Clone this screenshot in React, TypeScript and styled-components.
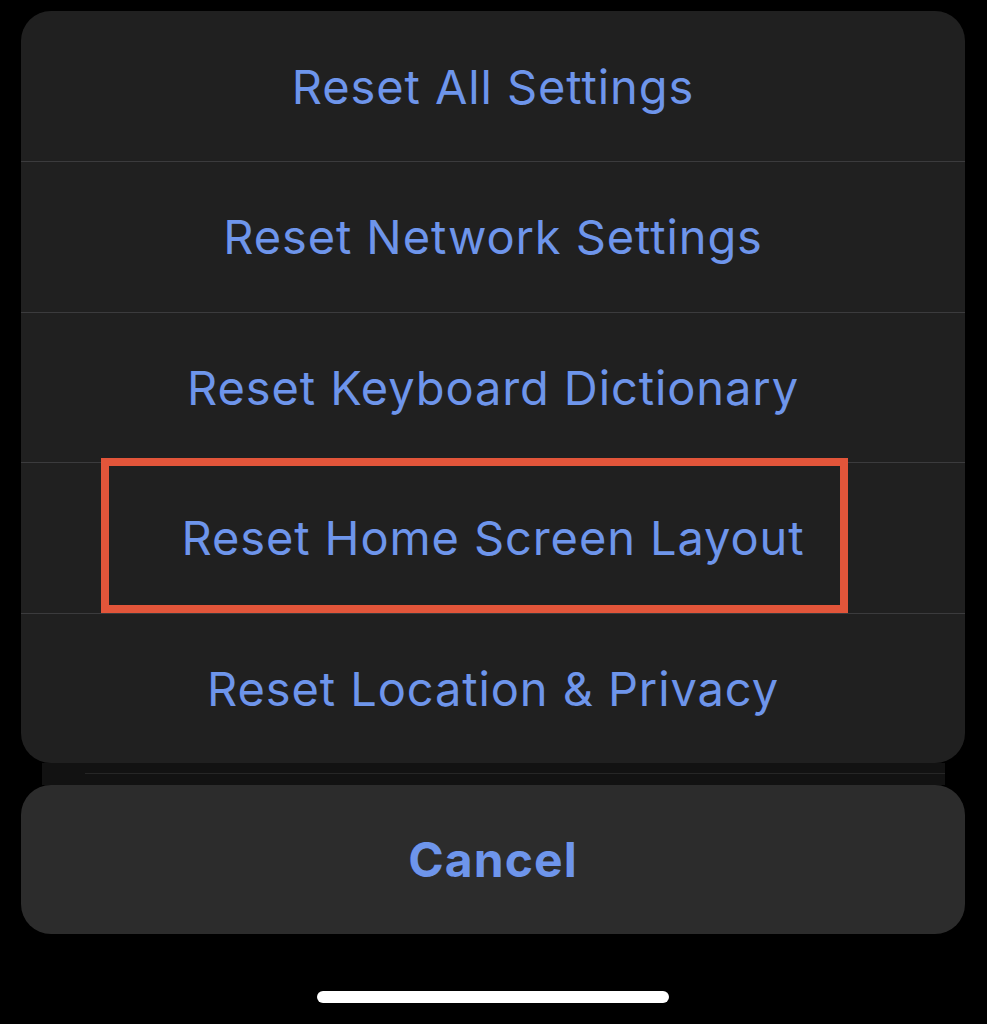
import styled, { createGlobalStyle } from "styled-components"

const GlobalStyle = createGlobalStyle`
    html, body {
        margin: 0;
        padding: 0;
        background: #000;
    }
    body {
        font-family: Inter, "Liberation Sans", sans-serif;
        -webkit-font-smoothing: antialiased;
    }
`

const options = [
    "Reset All Settings",
    "Reset Network Settings",
    "Reset Keyboard Dictionary",
    "Reset Home Screen Layout",
    "Reset Location & Privacy",
]

const App = () => {
    return (
        <>
            <GlobalStyle />
            <Sheet>
                <OptionsPanel>
                    {options.map((label, i) => (
                        <OptionRow key={label} $first={i === 0}>
                            <OptionLabel>{label}</OptionLabel>
                            {label === "Reset Home Screen Layout" && <Highlight />}
                        </OptionRow>
                    ))}
                </OptionsPanel>
                <StackEdge>
                    <StackLine />
                </StackEdge>
                <CancelPanel>
                    <CancelLabel>Cancel</CancelLabel>
                </CancelPanel>
                <HomeBar />
            </Sheet>
        </>
    )
}

const Sheet = styled.div`
    width: 987px;
    height: 1024px;
    box-sizing: border-box;
    padding: 11px 22px 0 21px;
    display: flex;
    flex-direction: column;
    background: #000;
    overflow: hidden;
`

const OptionsPanel = styled.div`
    display: flex;
    flex-direction: column;
    background-color: #202020;
    border-radius: 30px;
    overflow: hidden;
`

const OptionRow = styled.div<{ $first: boolean }>`
    position: relative;
    box-sizing: border-box;
    height: ${({ $first }) => ($first ? "150px" : "150.5px")};
    flex-shrink: 0;
    display: flex;
    align-items: center;
    justify-content: center;
    border-top: ${({ $first }) => ($first ? "none" : "1.5px solid #3b3b3d")};
`

const OptionLabel = styled.span`
    color: #6e95eb;
    font-size: 47px;
    font-weight: 400;
    letter-spacing: 0.9px;
`

const Highlight = styled.div`
    position: absolute;
    left: 80px;
    top: -5px;
    width: 747px;
    height: 155px;
    box-sizing: border-box;
    border: 8px solid #e2553a;
    pointer-events: none;
`

const StackEdge = styled.div`
    height: 22px;
    flex-shrink: 0;
    margin: 0 20px 0 21px;
    box-sizing: border-box;
    padding: 10px 0 0 43px;
    background-color: #121212;
`

const StackLine = styled.div`
    height: 1px;
    background-color: #262626;
`

const CancelPanel = styled.div`
    height: 149px;
    flex-shrink: 0;
    display: flex;
    align-items: center;
    justify-content: center;
    background-color: #2c2c2c;
    border-radius: 30px;
`

const CancelLabel = styled.span`
    color: #6e95eb;
    font-size: 48px;
    font-weight: 700;
    letter-spacing: 1.1px;
`

const HomeBar = styled.div`
    align-self: center;
    flex-shrink: 0;
    width: 352px;
    height: 12px;
    margin-top: 57px;
    border-radius: 6px;
    background-color: #fff;
`

export default App
